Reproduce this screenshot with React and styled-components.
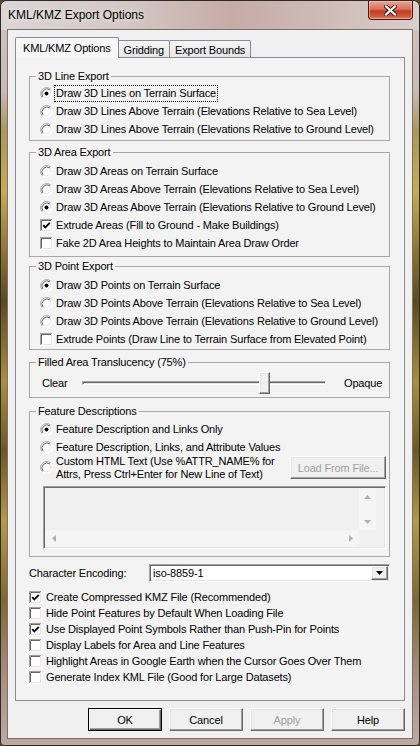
import styled, { createGlobalStyle, css } from 'styled-components'

const GlobalStyle = createGlobalStyle`
  html, body { margin: 0; padding: 0; }
  body {
    background: #5a4a2a;
    font-family: "Liberation Sans", Arial, sans-serif;
    font-size: 11px;
    letter-spacing: -0.15px;
    color: #000;
  }
  * { box-sizing: border-box; }
`

const raised = css`
  border: 1px solid;
  border-color: #fff #696969 #696969 #fff;
  box-shadow: inset -1px -1px 0 #a0a0a0, inset 1px 1px 0 #e3e3e3;
  background: #f0f0f0;
`

const sunken = css`
  border: 1px solid;
  border-color: #a0a0a0 #fff #fff #a0a0a0;
  box-shadow: inset 1px 1px 0 #696969, inset -1px -1px 0 #e3e3e3;
`

const Window = styled.div`
  width: 420px;
  height: 746px;
  display: flex;
  flex-direction: column;
  border: 1px solid #2e2a28;
  border-radius: 7px 7px 4px 4px;
  overflow: hidden;
  background: linear-gradient(to bottom, #cfc4c2 0, #c9bab6 90px, #a9975c 130px, #c6ad52 190px,
    #8a7535 250px, #5a4a22 300px, #a88f3e 380px, #6b5826 450px, #b29a48 520px, #7c6834 600px,
    #a99284 680px, #bfaaa4 746px);
`

const TitleBar = styled.div`
  height: 29px;
  flex: none;
  display: flex;
  justify-content: space-between;
  padding-left: 7px;
  background: linear-gradient(to right, #dcd6d6 0%, #d4c8c5 30%, #c6aca5 55%, #cdb9b4 75%, #d9cfcc 100%);
`

const Title = styled.span`
  margin-top: 6px;
  font-size: 12px;
  line-height: 16px;
  letter-spacing: 0;
  text-shadow: 0 0 6px rgba(255, 255, 255, 0.8);
`

const CloseButton = styled.div`
  width: 45px;
  height: 19px;
  margin-right: 6px;
  display: flex;
  align-items: center;
  justify-content: center;
  border: 1px solid #4a1a10;
  border-top: none;
  border-radius: 0 0 4px 4px;
  background: linear-gradient(to bottom, #e9a796 0%, #d8735d 45%, #c23b22 55%, #cf5a3a 85%, #e0876a 100%);
  box-shadow: inset 0 0 0 1px rgba(255, 200, 190, 0.5);
`

const Client = styled.div`
  flex: 1;
  margin: 0 7px 7px;
  padding: 7px;
  background: #f0f0f0;
  box-shadow: 0 0 0 1px #7d6e66;
  display: flex;
  flex-direction: column;
`

const TabStrip = styled.div`
  display: flex;
  align-items: flex-end;
  height: 20px;
  position: relative;
  z-index: 1;
`

const Tab = styled.div`
  display: flex;
  align-items: center;
  border: 1px solid #898c95;
  border-bottom: none;
  border-radius: 2px 2px 0 0;
  & + & { margin-left: -1px; }
  ${p => p.$active ? css`
    height: 21px;
    margin-bottom: -1px;
    padding: 0 7px;
    background: #f7f7f7;
  ` : css`
    height: 17px;
    padding: 1px 5px 0;
    background: linear-gradient(to bottom, #f5f5f5, #e6e6e6);
  `}
`

const Panel = styled.div`
  flex: 1;
  border: 1px solid #898c95;
  background: #f3f3f3;
  padding: 12px 14px 0 13px;
  display: flex;
  flex-direction: column;
`

const Group = styled.fieldset`
  margin: ${p => p.$mt || 0}px 0 0;
  padding: 0;
  min-width: 0;
  border: 1px solid #a8a8a8;
`

const Legend = styled.legend`
  margin-left: 6px;
  padding: 0 2px;
  line-height: 13px;
`

const GroupBody = styled.div`
  padding: ${p => p.$pt}px 3px ${p => p.$pb}px 10px;
  display: flex;
  flex-direction: column;
`

const OptionRow = styled.div`
  display: flex;
  align-items: center;
  gap: ${p => p.$gap ?? 3}px;
  height: ${p => p.$h ?? 18}px;
  flex: none;
`

const OptionText = styled.span`
  line-height: 13px;
  white-space: nowrap;
  ${p => p.$focus && css`
    outline: 1px dotted #000;
    outline-offset: 1px;
  `}
`

const MarkSvg = styled.svg`
  width: 13px;
  height: 13px;
  flex: none;
`

function Radio({ checked }) {
  return (
    <MarkSvg viewBox="0 0 13 13">
      <circle cx="6.5" cy="6.5" r="6" fill="#fff" />
      <path d="M2.26 10.74 A6 6 0 0 1 10.74 2.26" stroke="#a0a0a0" fill="none" />
      <path d="M10.74 2.26 A6 6 0 0 1 2.26 10.74" stroke="#fff" fill="none" />
      <path d="M3.0 10.0 A5 5 0 0 1 10.0 3.0" stroke="#696969" fill="none" />
      <path d="M10.0 3.0 A5 5 0 0 1 3.0 10.0" stroke="#e3e3e3" fill="none" />
      {checked && <circle cx="6.5" cy="6.5" r="2" fill="#000" />}
    </MarkSvg>
  )
}

function Check({ checked }) {
  return (
    <MarkSvg viewBox="0 0 13 13">
      <rect x="0" y="0" width="13" height="13" fill="#fff" />
      <path d="M0.5 13 V0.5 H13" stroke="#a0a0a0" fill="none" />
      <path d="M0 12.5 H12.5 V0" stroke="#fff" fill="none" />
      <path d="M1.5 12 V1.5 H12" stroke="#696969" fill="none" />
      <path d="M1 11.5 H11.5 V1" stroke="#e3e3e3" fill="none" />
      {checked && <path d="M3.2 6.2 L5.3 8.4 L9.8 3.8" stroke="#000" strokeWidth="1.9" fill="none" />}
    </MarkSvg>
  )
}

const SliderRow = styled.div`
  display: flex;
  align-items: center;
  height: 24px;
`

const SliderLabel = styled.span`
  width: ${p => p.$w}px;
  padding-left: ${p => p.$pl || 0}px;
  flex: none;
`

const Track = styled.div`
  position: relative;
  width: 244px;
  height: 24px;
  flex: none;
  display: flex;
  align-items: center;
`

const TrackLine = styled.div`
  width: 100%;
  height: 4px;
  ${sunken}
  background: #e8e8e8;
`

const Thumb = styled.div`
  position: absolute;
  top: 1px;
  width: 11px;
  height: 22px;
  ${raised}
`

const CustomRow = styled.div`
  display: flex;
  align-items: center;
  height: 23px;
`

const CustomText = styled.div`
  margin-left: 3px;
  line-height: 13px;
  white-space: nowrap;
`

const PushButton = styled.div`
  width: ${p => p.$w}px;
  height: 23px;
  margin-left: ${p => p.$ml || 0};
  display: flex;
  align-items: center;
  justify-content: center;
  color: ${p => p.$disabled ? '#a0a0a0' : '#000'};
  ${raised}
  ${p => p.$default && css`
    border: 1px solid #000;
    box-shadow: inset 1px 1px 0 #fff, inset -1px -1px 0 #696969, inset -2px -2px 0 #a0a0a0;
  `}
`

const Memo = styled.div`
  margin: 7px 0 0 3px;
  height: 63px;
  padding: 1px;
  ${sunken}
  background: #f0f0f0;
  display: grid;
  grid-template-columns: 1fr 17px 8px;
  grid-template-rows: 1fr 17px;
`

const ScrollBar = styled.div`
  background: #f5f5f5;
  display: flex;
  flex-direction: ${p => p.$vertical ? 'column' : 'row'};
  justify-content: space-between;
`

const ScrollArrow = styled.div`
  width: 17px;
  height: 17px;
  display: flex;
  align-items: center;
  justify-content: center;
`

const Arrow = ({ dir }) => {
  const pts = {
    up: '0,4 3.5,0 7,4',
    down: '0,0 7,0 3.5,4',
    left: '4,0 4,7 0,3.5',
    right: '0,0 4,3.5 0,7',
  }[dir]
  const w = dir === 'up' || dir === 'down' ? 7 : 4
  const h = dir === 'up' || dir === 'down' ? 4 : 7
  return (
    <svg width={w} height={h} viewBox={`0 0 ${w} ${h}`}>
      <polygon points={pts} fill="#b0b0b0" />
    </svg>
  )
}

const MemoCorner = styled.div`
  grid-column: ${p => p.$span};
`

const FieldRow = styled.div`
  display: flex;
  align-items: center;
  height: 18px;
  margin-top: 7px;
`

const FieldLabel = styled.span`
  width: 120px;
  flex: none;
`

const Select = styled.div`
  flex: 1;
  height: 18px;
  ${sunken}
  background: #fff;
  display: flex;
  align-items: center;
  justify-content: space-between;
  padding: 0 1px 0 3px;
`

const DropButton = styled.div`
  width: 17px;
  height: 14px;
  display: flex;
  align-items: center;
  justify-content: center;
  ${raised}
`

const CheckList = styled.div`
  margin-top: 7px;
  display: flex;
  flex-direction: column;
`

const ButtonRow = styled.div`
  display: flex;
  justify-content: flex-end;
  gap: 7px;
  margin-top: 7px;
`

const Option = ({ type = 'radio', checked, focus, children }) => (
  <OptionRow>
    {type === 'radio' ? <Radio checked={checked} /> : <Check checked={checked} />}
    <OptionText $focus={focus}>{children}</OptionText>
  </OptionRow>
)

const bottomChecks = [
  ['Create Compressed KMZ File (Recommended)', true],
  ['Hide Point Features by Default When Loading File', false],
  ['Use Displayed Point Symbols Rather than Push-Pin for Points', true],
  ['Display Labels for Area and Line Features', false],
  ['Highlight Areas in Google Earth when the Cursor Goes Over Them', false],
  ['Generate Index KML File (Good for Large Datasets)', false],
]

export default function App() {
  const translucency = 75
  return (
    <>
      <GlobalStyle />
      <Window>
        <TitleBar>
          <Title>KML/KMZ Export Options</Title>
          <CloseButton>
            <svg width="13" height="11" viewBox="0 0 13 11">
              <path d="M2 1.5 L11 9.5 M11 1.5 L2 9.5" stroke="#3a1a14" strokeWidth="4" strokeLinecap="square" />
              <path d="M2 1.5 L11 9.5 M11 1.5 L2 9.5" stroke="#fff" strokeWidth="2.2" strokeLinecap="square" />
            </svg>
          </CloseButton>
        </TitleBar>
        <Client>
          <TabStrip>
            <Tab $active>KML/KMZ Options</Tab>
            <Tab>Gridding</Tab>
            <Tab>Export Bounds</Tab>
          </TabStrip>
          <Panel>
            <Group>
              <Legend>3D Line Export</Legend>
              <GroupBody $pt={1} $pb={2}>
                <Option checked focus>Draw 3D Lines on Terrain Surface</Option>
                <Option>Draw 3D Lines Above Terrain (Elevations Relative to Sea Level)</Option>
                <Option>Draw 3D Lines Above Terrain (Elevations Relative to Ground Level)</Option>
              </GroupBody>
            </Group>
            <Group $mt={5}>
              <Legend>3D Area Export</Legend>
              <GroupBody $pt={3} $pb={4}>
                <Option>Draw 3D Areas on Terrain Surface</Option>
                <Option>Draw 3D Areas Above Terrain (Elevations Relative to Sea Level)</Option>
                <Option checked>Draw 3D Areas Above Terrain (Elevations Relative to Ground Level)</Option>
                <Option type="check" checked>Extrude Areas (Fill to Ground - Make Buildings)</Option>
                <Option type="check">Fake 2D Area Heights to Maintain Area Draw Order</Option>
              </GroupBody>
            </Group>
            <Group $mt={3}>
              <Legend>3D Point Export</Legend>
              <GroupBody $pt={3} $pb={1}>
                <Option checked>Draw 3D Points on Terrain Surface</Option>
                <Option>Draw 3D Points Above Terrain (Elevations Relative to Sea Level)</Option>
                <Option>Draw 3D Points Above Terrain (Elevations Relative to Ground Level)</Option>
                <Option type="check">Extrude Points (Draw Line to Terrain Surface from Elevated Point)</Option>
              </GroupBody>
            </Group>
            <Group $mt={6}>
              <Legend>Filled Area Translucency ({translucency}%)</Legend>
              <GroupBody $pt={2} $pb={2}>
                <SliderRow>
                  <SliderLabel $w={42} $pl={2}>Clear</SliderLabel>
                  <Track>
                    <TrackLine />
                    <Thumb style={{ left: `calc(${translucency}% - 6px)` }} />
                  </Track>
                  <SliderLabel $pl={18}>Opaque</SliderLabel>
                </SliderRow>
              </GroupBody>
            </Group>
            <Group $mt={7}>
              <Legend>Feature Descriptions</Legend>
              <GroupBody $pt={2} $pb={7}>
                <Option checked>Feature Description and Links Only</Option>
                <Option>Feature Description, Links, and Attribute Values</Option>
                <CustomRow>
                  <Radio />
                  <CustomText>
                    Custom HTML Text (Use %ATTR_NAME% for<br />
                    Attrs, Press Ctrl+Enter for New Line of Text)
                  </CustomText>
                  <PushButton $w={96} $ml="auto" $disabled>Load From File...</PushButton>
                </CustomRow>
                <Memo>
                  <div />
                  <ScrollBar $vertical>
                    <ScrollArrow><Arrow dir="up" /></ScrollArrow>
                    <ScrollArrow><Arrow dir="down" /></ScrollArrow>
                  </ScrollBar>
                  <div />
                  <ScrollBar>
                    <ScrollArrow><Arrow dir="left" /></ScrollArrow>
                    <ScrollArrow><Arrow dir="right" /></ScrollArrow>
                  </ScrollBar>
                  <MemoCorner $span="2 / 4" />
                </Memo>
              </GroupBody>
            </Group>
            <FieldRow>
              <FieldLabel>Character Encoding:</FieldLabel>
              <Select>
                <span>iso-8859-1</span>
                <DropButton>
                  <svg width="7" height="4" viewBox="0 0 7 4"><polygon points="0,0 7,0 3.5,4" fill="#000" /></svg>
                </DropButton>
              </Select>
            </FieldRow>
            <CheckList>
              {bottomChecks.map(([label, on]) => (
                <OptionRow key={label} $h={16} $gap={4}>
                  <Check checked={on} />
                  <OptionText>{label}</OptionText>
                </OptionRow>
              ))}
            </CheckList>
          </Panel>
          <ButtonRow>
            <PushButton $w={74} $default>OK</PushButton>
            <PushButton $w={74}>Cancel</PushButton>
            <PushButton $w={74} $disabled>Apply</PushButton>
            <PushButton $w={74}>Help</PushButton>
          </ButtonRow>
        </Client>
      </Window>
    </>
  )
}
